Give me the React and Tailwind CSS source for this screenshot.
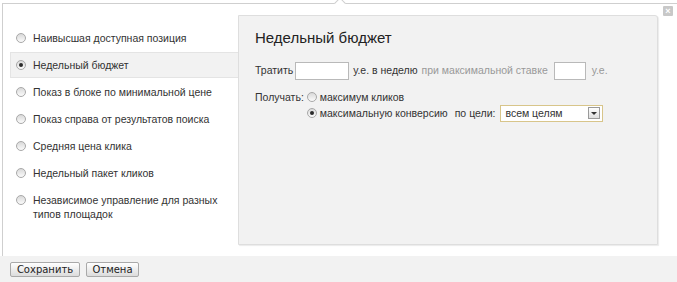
import React from 'react';

const strategies = [
  { label: 'Наивысшая доступная позиция' },
  { label: 'Недельный бюджет', active: true },
  { label: 'Показ в блоке по минимальной цене' },
  { label: 'Показ справа от результатов поиска' },
  { label: 'Средняя цена клика' },
  { label: 'Недельный пакет кликов' },
  { label: 'Независимое управление для разных типов площадок' },
];

function Radio({ checked }) {
  return (
    <span className="relative flex shrink-0 w-[10px] h-[10px] rounded-full border border-[#a8a8a8] bg-gradient-to-b from-[#d9d9d9] to-[#fbfbfb] items-center justify-center">
      {checked && <span className="w-[4px] h-[4px] rounded-full bg-[#2a2a2a]" />}
    </span>
  );
}

function Button({ children, className = '' }) {
  return (
    <button
      className={`h-[15px] border border-[#a9a9a9] rounded-[2px] bg-gradient-to-b from-white to-[#dcdcdc] text-[10px] leading-[13px] text-[#222] font-['DejaVu_Sans',sans-serif] ${className}`}
    >
      {children}
    </button>
  );
}

export default function App() {
  return (
    <div className="w-[677px] h-[282px] bg-white overflow-hidden relative font-['Liberation_Sans',Arial,sans-serif] text-[#333]">
      {/* popup frame */}
      <div className="relative mt-[3px] ml-[2px] h-[253px] border-t border-l border-[#cfcfcf]">
        <span className="absolute -top-[5px] left-[333px] w-[8px] h-[8px] rotate-45 bg-white border-t border-l border-[#cfcfcf]" />
        <span className="absolute top-[2px] left-[660px] w-[10px] h-[10px] rounded-[1px] bg-[#c8c8c8] text-white text-[9px] leading-[10px] text-center font-bold">×</span>

        <div className="flex pt-[11px]">
          <ul className="w-[235px] shrink-0 pt-[10px] pl-[7px] text-[10.5px]">
            {strategies.map((s) => (
              <li
                key={s.label}
                className={`flex items-start gap-[7px] pl-[5px] py-[5px] mb-[1px] leading-[14px] ${
                  s.active ? 'bg-[#f2f2f2] border-t border-b border-l border-[#e4e4e4] -mr-px' : 'border border-transparent'
                }`}
              >
                <span className="flex pt-[2px]">
                  <Radio checked={s.active} />
                </span>
                <span className="max-w-[186px]">{s.label}</span>
              </li>
            ))}
          </ul>

          <div className="w-[420px] h-[230px] bg-[#f2f2f2] border border-[#dedede] rounded-tr-[3px] shadow-[1px_1px_1px_rgba(0,0,0,0.08)] pl-[16px] pt-[12px]">
            <h2 className="text-[15px] leading-[20px] text-[#222] mb-[14px]">Недельный бюджет</h2>

            <div className="flex items-center text-[10.5px] h-[18px]">
              <span>Тратить</span>
              <input className="ml-[2px] w-[54px] h-[18px] bg-white border border-[#b9b9b9] outline-none" />
              <span className="ml-[4px]">у.е. в неделю</span>
              <span className="ml-[4px] text-[#999]">при максимальной ставке</span>
              <input className="ml-[6px] w-[32px] h-[18px] bg-white border border-[#b9b9b9] outline-none" />
              <span className="ml-[6px] text-[#999]">у.е.</span>
            </div>

            <div className="flex mt-[9px] text-[10.5px] leading-[16px]">
              <span>Получать:</span>
              <div className="ml-[3px] flex flex-col">
                <label className="flex items-center gap-[3px] h-[16px]">
                  <Radio />
                  <span>максимум кликов</span>
                </label>
                <label className="flex items-center gap-[3px] h-[16px]">
                  <Radio checked />
                  <span>максимальную конверсию</span>
                  <span className="ml-[4px]">по цели:</span>
                  <span className="ml-[2px] flex items-center shrink-0 w-[103px] h-[17px] bg-white border border-[#d8c58a] pl-[4px]">
                    <span className="flex-1">всем целям</span>
                    <span className="mr-[2px] w-[12px] h-[12px] border border-[#9a9a9a] bg-gradient-to-b from-white to-[#dedede] flex items-center justify-center">
                      <span className="w-0 h-0 border-l-[3px] border-r-[3px] border-t-[3px] border-l-transparent border-r-transparent border-t-[#333]" />
                    </span>
                  </span>
                </label>
              </div>
            </div>
          </div>
        </div>
      </div>

      {/* footer */}
      <div className="h-[26px] bg-[#f2f2f2] flex items-center gap-[6px] pl-[10px]">
        <Button className="w-[70px]">Сохранить</Button>
        <Button className="w-[53px]">Отмена</Button>
      </div>
    </div>
  );
}
